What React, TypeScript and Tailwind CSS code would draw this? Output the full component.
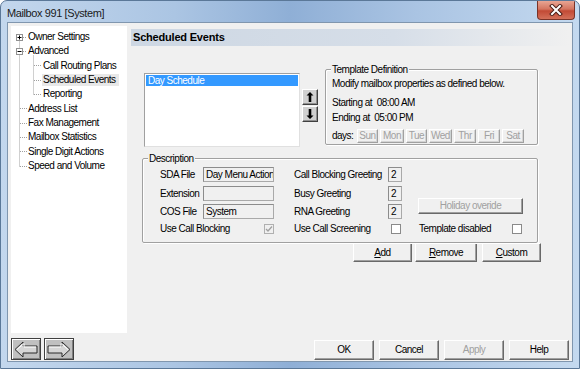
import React from "react";

const btnBase =
  "flex items-center justify-center bg-[#f0f0f0] border border-t-white border-l-white border-r-[#696969] border-b-[#696969] shadow-[inset_-1px_-1px_0_#a0a0a0] leading-none whitespace-nowrap";

function Btn({ children, className = "", disabled = false }: { children: React.ReactNode; className?: string; disabled?: boolean }) {
  return <div className={`${btnBase} ${disabled ? "text-[#a0a0a0]" : "text-black"} ${className}`}>{children}</div>;
}

function DayBtn({ label, w }: { label: string; w: string }) {
  return (
    <div className={`h-[14px] ${w} flex items-center justify-center bg-[#f0f0f0] border border-t-white border-l-white border-r-[#a0a0a0] border-b-[#a0a0a0] shadow-[inset_-1px_-1px_0_#d4d4d4] text-[#a0a0a0] leading-none`}>
      {label}
    </div>
  );
}

function Input({ value = "", w }: { value?: string; w: string }) {
  return (
    <div className={`h-[15px] ${w} border border-[#a9a9a9] border-t-[#8c8c8c] border-l-[#8c8c8c] bg-[#f0f0f0] flex items-center pl-[2px] leading-none whitespace-nowrap overflow-hidden`}>
      {value}
    </div>
  );
}

function Check({ checked = false, disabled = false }: { checked?: boolean; disabled?: boolean }) {
  return (
    <div className={`w-[10px] h-[10px] border ${disabled ? "border-[#b0b0b0] bg-[#f0f0f0]" : "border-[#8a8a8a] bg-white"} flex items-center justify-center`}>
      {checked && (
        <svg width="8" height="8" viewBox="0 0 8 8">
          <path d="M1 4 L3 6 L7 1.5" fill="none" stroke="#a0a0a0" strokeWidth="1.3" />
        </svg>
      )}
    </div>
  );
}

function GroupBox({ title, className, children }: { title: string; className: string; children: React.ReactNode }) {
  return (
    <div className={`relative border border-[#a0a0a0] rounded-[2px] shadow-[inset_1px_1px_0_#ffffff,1px_1px_0_#ffffff] ${className}`}>
      <span className="absolute -top-[7px] left-[5px] px-[1px] bg-[#f0f0f0] leading-[13px] whitespace-nowrap">{title}</span>
      {children}
    </div>
  );
}

const treeRows = [
  { text: "Owner Settings", level: 0 },
  { text: "Advanced", level: 0 },
  { text: "Call Routing Plans", level: 1 },
  { text: "Scheduled Events", level: 1, selected: true },
  { text: "Reporting", level: 1 },
  { text: "Address List", level: 0 },
  { text: "Fax Management", level: 0 },
  { text: "Mailbox Statistics", level: 0 },
  { text: "Single Digit Actions", level: 0 },
  { text: "Speed and Volume", level: 0 },
];

const cys = [11.5, 25.5, 39.5, 54.5, 68.5, 82.5, 97.5, 111.5, 125.5, 140.5];

function TreeLines() {
  const dot = { stroke: "#a0a0a0", strokeWidth: 1, strokeDasharray: "1 1", fill: "none" };
  return (
    <svg className="absolute left-0 top-0 pointer-events-none" width="45" height="160">
      <path d={`M8.5 ${cys[0]} V${cys[9]}`} {...dot} />
      <path d={`M22.5 ${cys[1] + 4} V${cys[4]}`} {...dot} />
      {[0, 1].map((i) => (
        <path key={"h" + i} d={`M12 ${cys[i]} H16`} {...dot} />
      ))}
      {[5, 6, 7, 8, 9].map((i) => (
        <path key={"r" + i} d={`M9 ${cys[i]} H16`} {...dot} />
      ))}
      {[2, 3, 4].map((i) => (
        <path key={"c" + i} d={`M23 ${cys[i]} H30`} {...dot} />
      ))}
      {[0, 1].map((i) => (
        <g key={"b" + i}>
          <rect x="5.5" y={cys[i] - 3} width="6" height="6" fill="white" stroke="#919191" />
          <path d={`M6.5 ${cys[i]} H10.5`} stroke="#000" />
          {i === 0 && <path d={`M8.5 ${cys[i] - 2} V${cys[i] + 2}`} stroke="#000" />}
        </g>
      ))}
    </svg>
  );
}

function NavArrow({ dir }: { dir: "left" | "right" }) {
  const pts = "3,10.5 11,3 11,7 25,7 25,14 11,14 11,18";
  return (
    <svg width="28" height="21" viewBox="0 0 28 21">
      <g transform={dir === "right" ? "translate(28,0) scale(-1,1)" : undefined}>
        <polygon points={pts} fill="#d6d6d6" stroke="#2a2a2a" strokeWidth="1" strokeLinejoin="miter" />
        <polyline points="5,10.5 12,4.5 12,8 24,8" fill="none" stroke="#ffffff" strokeWidth="1" />
      </g>
    </svg>
  );
}

function UpDown({ dir }: { dir: "up" | "down" }) {
  return (
    <div className="w-[16px] h-[16px] bg-[#d0d0d0] border border-t-white border-l-white border-r-[#404040] border-b-[#404040] shadow-[inset_-1px_-1px_0_#909090] flex items-center justify-center">
      <svg width="12" height="12" viewBox="0 0 12 12">
        <g transform={dir === "down" ? "translate(0,12) scale(1,-1)" : undefined}>
          <path d="M6 1 L9.5 4.5 L7.3 4.5 L7.3 11 L4.7 11 L4.7 4.5 L2.5 4.5 Z" fill="#000" />
        </g>
      </svg>
    </div>
  );
}

export default function App() {
  return (
    <div className="w-[580px] h-[369px] relative flex flex-col border border-[#5b7898] rounded-t-[7px] overflow-hidden bg-[linear-gradient(to_right,#c3d7ed_0%,#abc5e3_30%,#8fafd6_50%,#aac4e3_72%,#c4d9ef_100%)] font-['Liberation_Sans',Arial,sans-serif] text-[10px] tracking-[-0.5px] text-black">
      {/* title bar */}
      <div className="h-[21px] flex items-center pl-[6px] pt-[3px] text-[11px] tracking-[-0.4px] text-[#1a1a1a] leading-none">Mailbox 991 [System]</div>
      <div className="absolute top-0 right-[4px] w-[38px] h-[19px] rounded-b-[4px] border border-t-0 border-[#7a3328] bg-[linear-gradient(to_bottom,#e8a593_0%,#d47560_45%,#c24a35_55%,#d3705a_100%)] flex items-center justify-center">
        <svg width="14" height="12" viewBox="0 0 14 12">
          <path d="M3 2 L11 10 M11 2 L3 10" stroke="#4a1d16" strokeWidth="4" strokeLinecap="square" />
          <path d="M3 2 L11 10 M11 2 L3 10" stroke="#ffffff" strokeWidth="2" strokeLinecap="square" />
        </svg>
      </div>

      {/* client */}
      <div className="mx-[6px] h-[340px] border border-[#8096ae] bg-[#f0f0f0] flex flex-col">
        <div className="flex h-[310px] pt-[3px]">
          {/* tree */}
          <div className="relative ml-[3px] w-[116px] h-[307px] bg-white pt-[4px]">
            <TreeLines />
            {treeRows.map((r) => (
              <div key={r.text} className={`h-[14.33px] flex items-center ${r.level === 0 ? "pl-[16px]" : "pl-[31px]"}`}>
                <span className={`h-[12px] flex items-center pl-[1px] pr-[3px] leading-none whitespace-nowrap ${r.selected ? "bg-[#e8e8e8]" : ""}`}>{r.text}</span>
              </div>
            ))}
          </div>

          {/* right pane */}
          <div className="ml-[4px] flex-1 flex flex-col">
            <div className="mt-[3px] mr-[3px] h-[17px] flex items-center pl-[2px] bg-[linear-gradient(to_right,#cdd7e3_0%,#d6dee8_60%,#f0f0f0_100%)] text-[11px] tracking-[-0.2px] font-bold leading-none">
              Scheduled Events
            </div>

            <div className="mt-[23px] flex items-start">
              <div className="ml-[13px] mt-[4px] w-[156px] h-[74px] bg-white border border-[#a0a0a0] border-r-[#e0e0e0] border-b-[#e0e0e0] p-[1px]">
                <div className="h-[11px] bg-[#3399ff] text-white flex items-center pl-[2px] leading-none">Day Schedule</div>
              </div>
              <div className="ml-[2px] mt-[20px] flex flex-col gap-[1px]">
                <UpDown dir="up" />
                <UpDown dir="down" />
              </div>
              <GroupBox title="Template Definition" className="ml-[7px] w-[213px] h-[76px]">
                <div className="flex flex-col pl-[6px] leading-[13px]">
                  <div className="mt-[7px] h-[13px] whitespace-nowrap">Modify mailbox properties as defined below.</div>
                  <div className="mt-[6px] h-[13px] whitespace-pre">Starting at  08:00 AM</div>
                  <div className="mt-[2px] h-[13px] whitespace-pre">Ending at  05:00 PM</div>
                  <div className="mt-[5px] flex items-center">
                    <span className="w-[25px] leading-none">days:</span>
                    <div className="flex gap-[2px]">
                      <DayBtn label="Sun" w="w-[21px]" />
                      <DayBtn label="Mon" w="w-[24px]" />
                      <DayBtn label="Tue" w="w-[21px]" />
                      <DayBtn label="Wed" w="w-[23px]" />
                      <DayBtn label="Thr" w="w-[22px]" />
                      <DayBtn label="Fri" w="w-[22px]" />
                      <DayBtn label="Sat" w="w-[22px]" />
                    </div>
                  </div>
                </div>
              </GroupBox>
            </div>

            <GroupBox title="Description" className="mt-[11px] ml-[11px] w-[396px] h-[85px]">
              <div className="flex">
                <div className="ml-[17px] w-[114px] flex flex-col pt-[8px]">
                  <div className="h-[15px] flex items-center">
                    <span className="w-[43px] leading-none whitespace-nowrap">SDA File</span>
                    <Input value="Day Menu Action" w="w-[71px]" />
                  </div>
                  <div className="mt-[4px] h-[15px] flex items-center">
                    <span className="w-[43px] leading-none whitespace-nowrap">Extension</span>
                    <Input w="w-[71px]" />
                  </div>
                  <div className="mt-[3px] h-[15px] flex items-center">
                    <span className="w-[43px] leading-none whitespace-nowrap">COS File</span>
                    <Input value="System" w="w-[71px]" />
                  </div>
                  <div className="mt-[2px] h-[15px] flex items-center">
                    <span className="leading-none whitespace-nowrap">Use Call Blocking</span>
                    <div className="ml-auto">
                      <Check checked disabled />
                    </div>
                  </div>
                </div>

                <div className="ml-[20px] w-[108px] flex flex-col pt-[8px]">
                  <div className="h-[15px] flex items-center">
                    <span className="leading-none whitespace-nowrap">Call Blocking Greeting</span>
                    <div className="ml-auto"><Input value="2" w="w-[14px]" /></div>
                  </div>
                  <div className="mt-[4px] h-[15px] flex items-center">
                    <span className="leading-none whitespace-nowrap">Busy Greeting</span>
                    <div className="ml-auto"><Input value="2" w="w-[14px]" /></div>
                  </div>
                  <div className="mt-[3px] h-[15px] flex items-center">
                    <span className="leading-none whitespace-nowrap">RNA Greeting</span>
                    <div className="ml-auto"><Input value="2" w="w-[14px]" /></div>
                  </div>
                  <div className="mt-[2px] h-[15px] flex items-center">
                    <span className="leading-none whitespace-nowrap">Use Call Screening</span>
                    <div className="ml-auto mr-[1px]">
                      <Check />
                    </div>
                  </div>
                </div>

                <div className="ml-[16px] w-[105px] flex flex-col">
                  <Btn disabled className="mt-[39px] h-[16px] w-[105px]">Holiday overide</Btn>
                  <div className="mt-[7px] h-[15px] flex items-center">
                    <span className="ml-[1px] leading-none whitespace-nowrap">Template disabled</span>
                    <div className="ml-auto mr-[1px]">
                      <Check />
                    </div>
                  </div>
                </div>
              </div>
            </GroupBox>

            <div className="ml-[222px] flex">
              <Btn className="w-[59px] h-[19px]"><span><u>A</u>dd</span></Btn>
              <Btn className="ml-[3px] w-[62px] h-[19px]"><span><u>R</u>emove</span></Btn>
              <Btn className="ml-[5px] w-[59px] h-[19px]"><span><u>C</u>ustom</span></Btn>
            </div>
          </div>
        </div>

        {/* bottom row */}
        <div className="mt-[5px] flex items-start">
          <div className="ml-[3px] flex gap-[3px]">
            <div className="w-[30px] h-[22px] bg-[#c0c0c0] border border-[#404040] shadow-[inset_1px_1px_0_#ffffff,inset_-1px_-1px_0_#808080] flex items-center justify-center">
              <NavArrow dir="left" />
            </div>
            <div className="w-[30px] h-[22px] bg-[#c0c0c0] border border-[#404040] shadow-[inset_1px_1px_0_#ffffff,inset_-1px_-1px_0_#808080] flex items-center justify-center">
              <NavArrow dir="right" />
            </div>
          </div>
          <div className="ml-auto mr-[3px] mt-[2px] flex gap-[5px]">
            <Btn className="w-[60px] h-[20px]">OK</Btn>
            <Btn className="w-[60px] h-[20px]">Cancel</Btn>
            <Btn disabled className="w-[60px] h-[20px]">Apply</Btn>
            <Btn className="w-[60px] h-[20px]">Help</Btn>
          </div>
        </div>
      </div>
    </div>
  );
}
